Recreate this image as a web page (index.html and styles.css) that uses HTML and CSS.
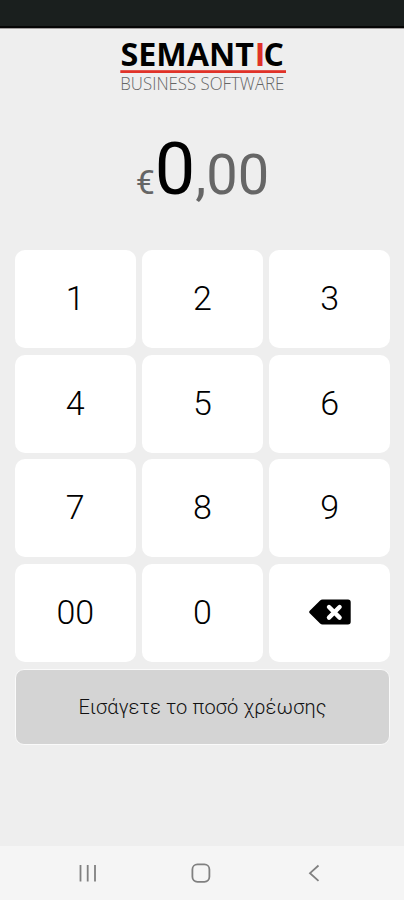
FILE: index.html
```
<!DOCTYPE html>
<html lang="el">
<head>
<meta charset="utf-8">
<title>Semantic</title>
<link rel="stylesheet" href="styles.css">
</head>
<body>
<div class="status"></div>
<main class="main">
  <svg class="logo" width="168" height="54" viewBox="0 0 168 54" role="img">
    <text class="brand" x="1.5" y="27.5" textLength="133.5" lengthAdjust="spacingAndGlyphs">SEMANT</text>
    <text class="brand red" x="135.8" y="27.5">I</text>
    <text class="brand" x="144.6" y="27.5">C</text>
    <rect class="rule" x="1.3" y="32.2" width="165.7" height="2.8"/>
    <text class="tagline" x="1.3" y="52" textLength="164" lengthAdjust="spacingAndGlyphs">BUSINESS SOFTWARE</text>
  </svg>
  <div class="amount"><span class="currency">€</span><span class="whole">0</span><span class="cents">,00</span></div>
  <div class="keypad">
    <button class="key">1</button><button class="key">2</button><button class="key">3</button>
    <button class="key">4</button><button class="key">5</button><button class="key">6</button>
    <button class="key">7</button><button class="key">8</button><button class="key">9</button>
    <button class="key">00</button><button class="key">0</button>
    <button class="key">
      <svg width="42" height="26" viewBox="0 0 42 26">
        <path d="M13.5 .5H39a2.7 2.7 0 0 1 2.7 2.7v19.6a2.7 2.7 0 0 1-2.7 2.7H13.5a3.5 3.5 0 0 1-2.4-1L1 14.6a2.2 2.2 0 0 1 0-3.2L11.1 1.5a3.5 3.5 0 0 1 2.4-1z"/>
        <path class="cross" d="M20 8l10.6 10.6M30.6 8L20 18.6"/>
      </svg>
    </button>
  </div>
  <button class="submit">Εισάγετε το ποσό χρέωσης</button>
</main>
<nav class="nav">
  <svg width="18" height="18" viewBox="0 0 18 18"><path d="M1.5 1v16.5M8.7 1v16.5M16 1v16.5"/></svg>
  <svg width="20" height="20" viewBox="0 0 20 20"><rect x="1.4" y="1.4" width="17" height="17.4" rx="5"/></svg>
  <svg width="12" height="18" viewBox="0 0 12 18"><path d="M10.5 1.5L2 9.2l8.5 7.7"/></svg>
</nav>
</body>
</html>
```
FILE: styles.css
```
* { box-sizing: border-box; }
body {
  margin: 0;
  height: 900px;
  display: flex;
  flex-direction: column;
  background: #eee;
  font-family: Roboto, "Noto Sans", sans-serif;
  color: #000;
}
.status {
  height: 29px;
  background: #1a1f1e;
  border-bottom: 1px solid #a09c9c;
  box-shadow: inset 0 -2px #050505;
}
.main {
  flex: 1;
  display: flex;
  flex-direction: column;
  align-items: center;
  padding: 9px 14px 0 15px;
}
.logo { display: block; overflow: visible; }
.brand { font: 700 32px "Open Sans", sans-serif; }
.red, .rule { fill: #e03228; }
.tagline { font: 300 17.5px "Open Sans", sans-serif; fill: #666; }
.amount {
  display: flex;
  align-items: baseline;
  height: 84px;
  margin-top: 36px;
  line-height: 84px;
  color: #666;
}
.currency { font-size: 34px; }
.whole { font-size: 72px; color: #000; }
.cents { font-size: 56px; }
.keypad {
  width: 100%;
  display: grid;
  grid-template-columns: repeat(3, 1fr);
  grid-auto-rows: 98px;
  gap: 6.7px;
  margin-top: 38px;
}
.key {
  display: flex;
  align-items: center;
  justify-content: center;
  padding: 0 0 2px;
  border: 0;
  border-radius: 10px;
  background: #fff;
  color: #000;
  font: 350 34px Roboto, sans-serif;
}
.cross { stroke: #fff; stroke-width: 4.4; stroke-linecap: round; }
.submit {
  width: 100%;
  height: 76px;
  margin-top: 6.9px;
  padding: 0;
  border: 1px solid #fafafa;
  border-radius: 9px;
  background: #d4d4d4;
  color: #111;
  font: 350 20px Roboto, sans-serif;
  letter-spacing: .13px;
}
.nav {
  height: 54px;
  display: grid;
  grid-template-columns: repeat(3, 113px);
  justify-content: center;
  justify-items: center;
  align-items: center;
  padding-right: 2px;
  background: #f5f5f5;
}
.nav svg { fill: none; stroke: #808080; stroke-width: 1.8; }
```
